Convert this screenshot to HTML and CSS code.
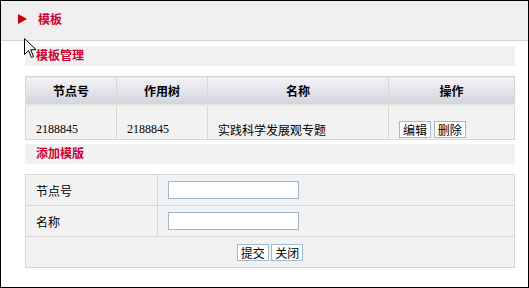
FILE: index.html
```html
<!DOCTYPE html>
<html lang="zh-CN">
  <head>
    <meta charset="UTF-8" />
    <title>模板</title>
    <link rel="stylesheet" href="styles.css">
  </head>
  <body>
    <div class="page">
      <div class="head">
        <span class="arrow"></span>
        <span class="head-title">模板</span>
      </div>

      <div class="content">
        <div class="bar">模板管理</div>
        <table class="list">
          <thead>
            <tr>
              <th class="col-id">节点号</th>
              <th class="col-tree">作用树</th>
              <th class="col-name">名称</th>
              <th>操作</th>
            </tr>
          </thead>
          <tbody>
            <tr>
              <td class="num">2188845</td>
              <td class="num">2188845</td>
              <td>实践科学发展观专题</td>
              <td><button class="btn">编辑</button> <button class="btn">删除</button></td>
            </tr>
          </tbody>
        </table>

        <div class="bar">添加模版</div>
        <table class="form">
          <tr>
            <td class="label">节点号</td>
            <td><input type="text" class="field" /></td>
          </tr>
          <tr>
            <td class="label">名称</td>
            <td><input type="text" class="field" /></td>
          </tr>
          <tr>
            <td colspan="2" class="actions">
              <button class="btn">提交</button> <button class="btn">关闭</button>
            </td>
          </tr>
        </table>
      </div>

      <!-- mouse pointer left in the screenshot -->
      <svg class="cursor" width="13" height="21" viewBox="0 0 13 21">
        <path d="M0.5 0.5 L0.5 16.5 L4.5 12.5 L7.5 19.5 L9.5 18.5 L6.7 11.7 L12 11.7 Z" fill="#fff" stroke="#000" stroke-width="1" />
      </svg>
    </div>
  </body>
</html>
```

FILE: styles.css
```css
body {
  margin: 0;
  font-family: "Noto Sans CJK SC", sans-serif;
  font-size: 12px;
  color: #000;
}
.page {
  position: relative;
  width: 529px;
  height: 288px;
  box-sizing: border-box;
  border: 1px solid #000;
  background-color: #fff;
}
.head {
  height: 40px;
  background-color: #efefef;
  border-bottom: 1px solid #d4d4d4;
  display: flex;
  align-items: center;
  padding: 0 0 3px 17px;
  box-sizing: border-box;
}
.arrow {
  width: 0;
  height: 0;
  border-top: 5px solid transparent;
  border-bottom: 5px solid transparent;
  border-left: 9px solid #cc0000;
}
.head-title {
  margin-left: 11px;
  font-weight: bold;
  color: #cc0033;
  line-height: 12px;
}
.content {
  padding: 0 13px 0 24px;
}
.bar {
  margin-top: 5px;
  height: 20px;
  line-height: 18px;
  padding-left: 11px;
  background-color: #f1f1f1;
  color: #cc0033;
  font-weight: bold;
}
table {
  width: 490px;
  border-collapse: collapse;
  margin-top: 10px;
  background-color: #f2f2f2;
}
td,
th {
  border: 1px solid #d6d6d2;
  padding: 0;
}
.list th {
  height: 27px;
  background: linear-gradient(#f3f3f7, #d3d3df);
  border-bottom: 2px solid #dcecd8;
  font-weight: bold;
  line-height: 12px;
}
.col-id,
.col-tree {
  width: 90px;
}
.col-name {
  width: 180px;
}
.list td {
  height: 31px;
  vertical-align: bottom;
  padding: 0 0 1px 10px;
}
.list td.num {
  font-family: "Liberation Serif", serif;
  padding-bottom: 2px;
}
.list + .bar {
  margin-top: 4px;
}
.btn {
  font-family: "Noto Sans CJK SC", sans-serif;
  font-size: 12px;
  line-height: 13px;
  height: 17px;
  padding: 0 3px;
  margin: 0;
  background-color: #fff;
  border: 1px solid #9fbcd3;
  border-radius: 0;
  color: #000;
}
.form td {
  height: 30px;
  padding: 0 10px;
}
.form .label {
  width: 111px;
}
.field {
  display: block;
  width: 131px;
  height: 18px;
  box-sizing: border-box;
  border: 1px solid #9ab8d0;
  margin: 0;
  padding: 0 2px;
  background-color: #fff;
}
.actions {
  text-align: center;
}
.cursor {
  position: absolute;
  left: 23px;
  top: 37px;
}
```
